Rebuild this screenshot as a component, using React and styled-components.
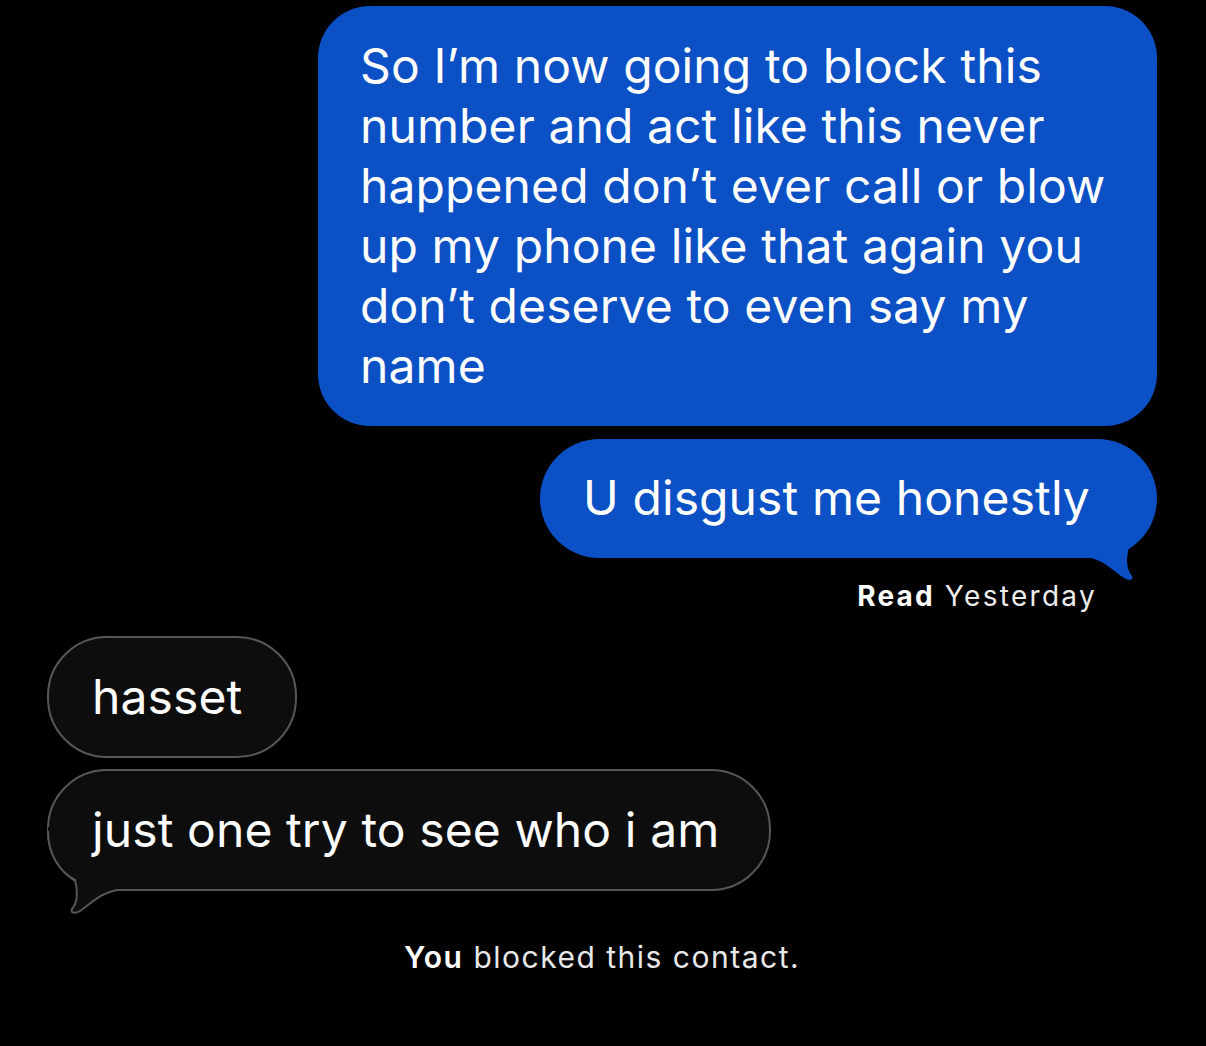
import React from 'react';
import styled, { createGlobalStyle } from 'styled-components';

const GlobalStyle = createGlobalStyle`
  html, body {
    margin: 0;
    padding: 0;
    background: #000;
  }
  body {
    font-family: Inter, "Noto Sans", "Liberation Sans", sans-serif;
    color: #fff;
    -webkit-font-smoothing: antialiased;
  }
`;

const Thread = styled.div`
  width: 1206px;
  height: 1046px;
  box-sizing: border-box;
  padding: 6px 49px 0 47px;
  display: flex;
  flex-direction: column;
  background: #000;
  overflow: hidden;
`;

const Bubble = styled.div`
  position: relative;
  box-sizing: border-box;
  width: ${({ $width }) => $width}px;
  margin-top: ${({ $top }) => $top || 0}px;
  align-self: ${({ $sent }) => ($sent ? 'flex-end' : 'flex-start')};
  padding: ${({ $pad }) => $pad};
  border-radius: ${({ $radius }) => $radius || 60}px;
  background: ${({ $sent }) => ($sent ? '#0b50c4' : '#0d0d0d')};
  border: ${({ $sent }) => ($sent ? 'none' : '2px solid #575757')};
  font-size: 48px;
  line-height: 60px;
  letter-spacing: 0.1px;
  white-space: nowrap;
`;

const BubbleText = styled.span`
  position: relative;
  z-index: 1;
`;

const Receipt = styled.div`
  align-self: flex-end;
  margin: 20px 60px 0 0;
  font-size: 28px;
  line-height: 36px;
  letter-spacing: 2.3px;
  color: #ececec;
  b {
    color: #fff;
    font-weight: 700;
    letter-spacing: 2.1px;
  }
`;

const Notice = styled.div`
  align-self: center;
  margin: 46px 0 0 0;
  font-size: 30px;
  line-height: 40px;
  color: #e8e8e8;
  letter-spacing: 1.5px;
  b {
    color: #fff;
    font-weight: 600;
  }
`;

const TailSvg = styled.svg`
  position: absolute;
  z-index: 0;
  bottom: ${({ $inset }) => -30 - $inset}px;
  ${({ $side, $inset }) => ($side === 'right' ? `right: ${-$inset}px;` : `left: ${-$inset}px;`)}
  width: 80px;
  height: 100px;
  overflow: visible;
  transform: ${({ $side }) => ($side === 'right' ? 'scaleX(-1)' : 'none')};
`;

// tail outline, origin at the bubble's bottom-left outer corner
const outline =
  'M 1 -60 C 1 -36 13 -19 28 -11 C 31 1 31 11 25 18 C 23 22 28 23 33 20 C 45 12 53 2 70 -1';

const Tail = ({ side, fill, stroke }) => (
  <TailSvg $side={side} $inset={stroke ? 2 : 0} viewBox="0 -70 80 100">
    <path d={`${outline} L 70 -64 L 1 -64 Z`} fill={fill} />
    {stroke && <path d={outline} fill="none" stroke={stroke} strokeWidth="2" />}
  </TailSvg>
);

export default function App() {
  return (
    <>
      <GlobalStyle />
      <Thread>
        <Bubble $sent $width={839} $radius={52} $pad="30px 30px 30px 42px">
          So I’m now going to block this<br />
          number and act like this never<br />
          happened don’t ever call or blow<br />
          up my phone like that again you<br />
          don’t deserve to even say my<br />
          name
        </Bubble>
        <Bubble $sent $width={617} $top={13} $pad="29px 20px 30px 43px">
          <BubbleText>U disgust me honestly</BubbleText>
          <Tail side="right" fill="#0b50c4" />
        </Bubble>
        <Receipt>
          <b>Read</b> Yesterday
        </Receipt>
        <Bubble $width={250} $top={22} $pad="29px 20px 29px 43px">
          hasset
        </Bubble>
        <Bubble $width={724} $top={11} $pad="29px 20px 29px 43px">
          <BubbleText>just one try to see who i am</BubbleText>
          <Tail side="left" fill="#0d0d0d" stroke="#575757" />
        </Bubble>
        <Notice>
          <b>You</b> blocked this contact.
        </Notice>
      </Thread>
    </>
  );
}
